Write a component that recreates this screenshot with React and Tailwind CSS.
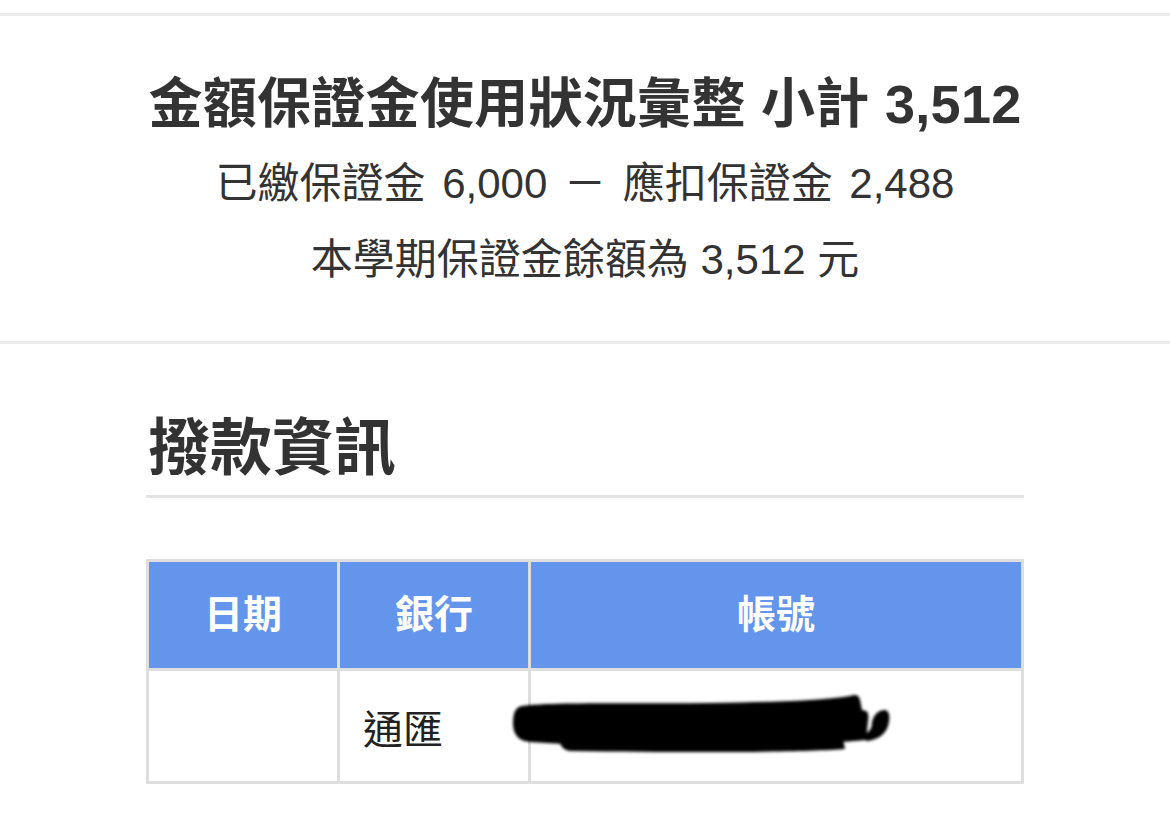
import React from "react";

const FONT = { fontFamily: '"Liberation Sans", "Noto Sans CJK TC", sans-serif' };

function Redaction() {
  return (
    <svg
      className="absolute left-[364px] top-[131px] pointer-events-none"
      width="390"
      height="72"
      viewBox="0 0 390 72"
    >
      <defs>
        <filter id="blur1" x="-10%" y="-30%" width="120%" height="160%">
          <feGaussianBlur stdDeviation="1.6" />
        </filter>
      </defs>
      <g filter="url(#blur1)" fill="#050505">
        <path d="M12 16 C 40 12, 120 14, 200 13 C 260 12, 310 11, 340 6 C 346 4, 349 5, 350 10 L 352 20 L 356 21 C 358 22, 359 25, 358 31 L 356 50 C 336 52, 300 54, 240 56 C 160 58, 80 56, 20 52 C 8 51, 3 44, 3 33 C 3 22, 6 17, 12 16 Z" />
        <path d="M50 44 C 120 48, 250 48, 332 44 L 335 59 C 300 62, 200 63, 60 61 C 52 60, 48 54, 50 44 Z" />
        <path d="M362 32 C 364 24, 369 20, 375 20 C 379 21, 380 25, 379 32 C 377 44, 368 50, 356 51 L 354 44 C 360 42, 362 38, 362 32 Z" />
      </g>
    </svg>
  );
}

export default function App() {
  return (
    <div className="w-full min-h-[834px] bg-white text-[#333]" style={FONT}>
      <div className="h-[13px] bg-white" />
      <div className="h-[3px] bg-[#ebebeb]" />

      <section className="flex flex-col items-center pt-[55px] pb-[52px]">
        <h1 className="text-[54px] leading-[66px] font-bold tracking-[0.3px] text-[#333] whitespace-nowrap">
          金額保證金使用狀況彙整 小計 3,512
        </h1>
        <p className="mt-[18px] text-[42px] leading-[58px] text-[#333] whitespace-nowrap [word-spacing:5px]">
          已繳保證金 6,000 － 應扣保證金 2,488
        </p>
        <p className="mt-[18px] text-[42px] leading-[58px] text-[#333] whitespace-nowrap">
          本學期保證金餘額為 3,512 元
        </p>
      </section>

      <div className="h-[3px] bg-[#ebebeb]" />

      <section className="w-[878px] mx-auto pt-[65px]">
        <h2 className="text-[62px] leading-[80px] font-bold text-[#333] pl-[2px]">
          撥款資訊
        </h2>
        <div className="mt-[6px] h-[3px] bg-[#e3e3e3]" />

        <div className="relative mt-[61px]">
          <div className="grid grid-cols-[188px_188px_1fr] border-[3px] border-[#dedede] bg-[#dedede] gap-[3px]">
            <div className="h-[106px] bg-[#6495ed] flex items-center justify-center text-white text-[39px] font-bold">
              日期
            </div>
            <div className="h-[106px] bg-[#6495ed] flex items-center justify-center text-white text-[39px] font-bold">
              銀行
            </div>
            <div className="h-[106px] bg-[#6495ed] flex items-center justify-center text-white text-[39px] font-bold">
              帳號
            </div>
            <div className="h-[110px] bg-white" />
            <div className="h-[110px] bg-white flex items-center pl-[23px] pt-[8px] text-[40px] text-[#222]">
              通匯
            </div>
            <div className="h-[110px] bg-white" />
          </div>
          <Redaction />
        </div>
      </section>
    </div>
  );
}
